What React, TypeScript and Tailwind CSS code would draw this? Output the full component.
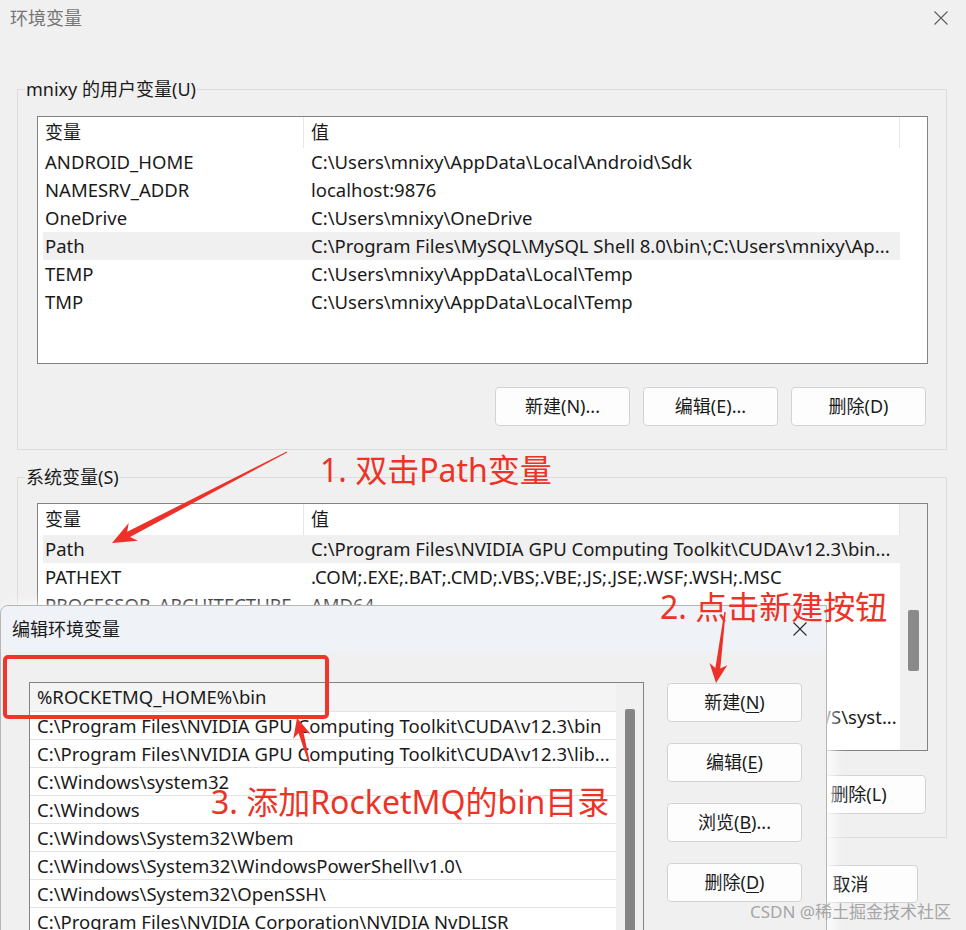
import React from "react";

type Row = [string, string];

const userVars: Row[] = [
  ["ANDROID_HOME", "C:\\Users\\mnixy\\AppData\\Local\\Android\\Sdk"],
  ["NAMESRV_ADDR", "localhost:9876"],
  ["OneDrive", "C:\\Users\\mnixy\\OneDrive"],
  ["Path", "C:\\Program Files\\MySQL\\MySQL Shell 8.0\\bin\\;C:\\Users\\mnixy\\Ap..."],
  ["TEMP", "C:\\Users\\mnixy\\AppData\\Local\\Temp"],
  ["TMP", "C:\\Users\\mnixy\\AppData\\Local\\Temp"],
];

const sysVars: Row[] = [
  ["Path", "C:\\Program Files\\NVIDIA GPU Computing Toolkit\\CUDA\\v12.3\\bin..."],
  ["PATHEXT", ".COM;.EXE;.BAT;.CMD;.VBS;.VBE;.JS;.JSE;.WSF;.WSH;.MSC"],
  ["PROCESSOR_ARCHITECTURE", "AMD64"],
  ["PROCESSOR_IDENTIFIER", "Intel64 Family 6 Model 154 Stepping 3, GenuineIntel"],
  ["PROCESSOR_LEVEL", "6"],
  ["PROCESSOR_REVISION", "9a03"],
  ["PSModulePath", "%ProgramFiles%\\WindowsPowerShell\\Modules;C:\\WINDOWS\\syst..."],
  ["TEMP", "C:\\WINDOWS\\TEMP"],
];

const pathEntries = [
  "%ROCKETMQ_HOME%\\bin",
  "C:\\Program Files\\NVIDIA GPU Computing Toolkit\\CUDA\\v12.3\\bin",
  "C:\\Program Files\\NVIDIA GPU Computing Toolkit\\CUDA\\v12.3\\lib...",
  "C:\\Windows\\system32",
  "C:\\Windows",
  "C:\\Windows\\System32\\Wbem",
  "C:\\Windows\\System32\\WindowsPowerShell\\v1.0\\",
  "C:\\Windows\\System32\\OpenSSH\\",
  "C:\\Program Files\\NVIDIA Corporation\\NVIDIA NvDLISR",
];

const CloseIcon = ({ color = "#5c5c5c" }: { color?: string }) => (
  <svg width="14" height="14" viewBox="0 0 14 14">
    <path d="M0.5 0.5L13.5 13.5M13.5 0.5L0.5 13.5" stroke={color} strokeWidth="1.1" />
  </svg>
);

const Btn = ({ children, className = "" }: { children: React.ReactNode; className?: string }) => (
  <div
    className={`flex w-[135px] shrink-0 items-center justify-center rounded-[4px] border border-[#d3d3d3] bg-[#fdfdfd] text-[18px] ${className}`}
  >
    {children}
  </div>
);

const GroupBox = ({
  title,
  className,
  children,
}: {
  title: string;
  className: string;
  children: React.ReactNode;
}) => (
  <fieldset className={`ml-[17px] w-[930px] border border-[#dcdcdc] pb-[23px] pl-[19px] ${className}`}>
    <legend className="-ml-[12px] px-[1px] text-[18px] leading-[24px]">{title}</legend>
    {children}
  </fieldset>
);

const VarList = ({
  rows,
  selected,
  scrollbar,
  className,
}: {
  rows: Row[];
  selected: number;
  scrollbar?: boolean;
  className: string;
}) => (
  <div className={`flex h-[248px] w-[891px] overflow-hidden border border-[#838383] bg-white ${className}`}>
    <div className="w-[862px] pl-[5px]">
      <div className="flex h-[31px] text-[18px]">
        <div className="flex w-[261px] items-center border-r border-[#e6e6e6] pl-[2px]">变量</div>
        <div className="flex flex-1 items-center border-r border-[#e6e6e6] pl-[7px]">值</div>
      </div>
      {rows.map(([name, value], i) => (
        <div key={name + i} className={`flex h-[28px] items-center ${i === selected ? "bg-[#f0f0f0]" : ""}`}>
          <div className="w-[261px] overflow-hidden whitespace-nowrap pl-[2px]">{name}</div>
          <div className="flex-1 overflow-hidden whitespace-nowrap pl-[7px]">{value}</div>
        </div>
      ))}
    </div>
    {scrollbar ? (
      <div className="flex-1 bg-[#f0f0f0] pl-[8px] pt-[106px]">
        <div className="h-[61px] w-[11px] rounded-[2px] bg-[#8a8a8a]" />
      </div>
    ) : null}
  </div>
);

function arrow(
  tail: [number, number],
  tip: [number, number],
  headLen: number,
  headW: number,
  tailW: number,
  neckW: number
) {
  const dx = tail[0] - tip[0];
  const dy = tail[1] - tip[1];
  const len = Math.hypot(dx, dy);
  const ux = dx / len;
  const uy = dy / len;
  const nx = -uy;
  const ny = ux;
  const bx = tip[0] + ux * headLen;
  const by = tip[1] + uy * headLen;
  const nkx = tip[0] + ux * headLen * 0.78;
  const nky = tip[1] + uy * headLen * 0.78;
  const pts = [
    [tip[0], tip[1]],
    [bx + nx * headW, by + ny * headW],
    [nkx + nx * neckW, nky + ny * neckW],
    [tail[0] + nx * tailW, tail[1] + ny * tailW],
    [tail[0] - nx * tailW, tail[1] - ny * tailW],
    [nkx - nx * neckW, nky - ny * neckW],
    [bx - nx * headW, by - ny * headW],
  ];
  return pts.map((p) => p.map((v) => v.toFixed(1)).join(",")).join(" ");
}

export default function App() {
  return (
    <div className="relative h-[930px] w-[966px] overflow-hidden bg-[#f0f0f0] font-['Noto_Sans','Noto_Sans_CJK_SC',sans-serif] text-[18.5px] text-[#1a1a1a]">
      {/* 环境变量 window */}
      <div className="flex h-full flex-col">
        <div className="flex h-[36px] shrink-0 items-center justify-between pl-[10px] pr-[18px] text-[18px] text-[#767676]">
          <span>环境变量</span>
          <CloseIcon />
        </div>

        <GroupBox title="mnixy 的用户变量(U)" className="mt-[41px]">
          <VarList rows={userVars} selected={3} className="mt-[15px]" />
          <div className="mt-[23px] flex w-[891px] justify-end gap-[13px] pr-[2px]">
            <Btn className="h-[39px]">新建(N)...</Btn>
            <Btn className="h-[39px]">编辑(E)...</Btn>
            <Btn className="h-[39px]">删除(D)</Btn>
          </div>
        </GroupBox>

        <GroupBox title="系统变量(S)" className="mt-[15px]">
          <VarList rows={sysVars} selected={0} scrollbar className="mt-[14px]" />
          <div className="mt-[24px] flex w-[891px] justify-end gap-[13px] pr-[2px]">
            <Btn className="h-[39px]">新建(W)...</Btn>
            <Btn className="h-[39px]">编辑(I)...</Btn>
            <Btn className="h-[39px]">删除(L)</Btn>
          </div>
        </GroupBox>

        <div className="mt-[27px] flex justify-end gap-[13px] pr-[48px]">
          <Btn className="h-[38px]">确定</Btn>
          <Btn className="h-[38px]">取消</Btn>
        </div>
      </div>

      {/* 编辑环境变量 dialog */}
      <div className="absolute left-0 top-[605px] h-[340px] w-[827px] rounded-tl-[8px] border border-[#b5b5b5] bg-[#f0f0f0] shadow-[6px_0_14px_rgba(255,255,255,0.9)]">
        <div className="flex h-[46px] items-center justify-between rounded-tl-[8px] bg-[#eff2f7] pl-[11px] pr-[19px] text-[18px]">
          <span>编辑环境变量</span>
          <CloseIcon color="#2a2a2a" />
        </div>
        <div className="flex gap-[23px] pl-[28px] pt-[30px]">
          <div className="flex h-[300px] w-[615px] shrink-0 border border-[#838383] bg-white">
            <div className="w-[586px] overflow-hidden">
              {pathEntries.map((p, i) => (
                <div
                  key={p}
                  className={`flex h-[28px] items-center whitespace-nowrap pl-[7px] ${
                    i === 0 ? "bg-[#f4f4f4]" : "border-t border-[#e3e3e3]"
                  }`}
                >
                  {p}
                </div>
              ))}
            </div>
            <div className="flex-1 bg-[#f0f0f0] pl-[9px] pt-[26px]">
              <div className="h-[300px] w-[10px] rounded-[2px] bg-[#858585]" />
            </div>
          </div>
          <div className="mt-[1px] flex flex-col gap-[21px]">
            <Btn className="h-[39px]">
              新建(<span className="underline underline-offset-[3px]">N</span>)
            </Btn>
            <Btn className="h-[39px]">
              编辑(<span className="underline underline-offset-[3px]">E</span>)
            </Btn>
            <Btn className="h-[39px]">
              浏览(<span className="underline underline-offset-[3px]">B</span>)...
            </Btn>
            <Btn className="h-[39px]">
              删除(<span className="underline underline-offset-[3px]">D</span>)
            </Btn>
          </div>
        </div>
      </div>

      {/* annotations */}
      <svg className="pointer-events-none absolute inset-0" width="966" height="930" viewBox="0 0 966 930">
        <rect x="5" y="657" width="322" height="60" rx="3" fill="none" stroke="#f0352b" strokeWidth="4" />
        <polygon fill="#ee3128" points={arrow([287, 452], [112, 543], 24, 10, 0.5, 3)} />
        <polygon fill="#ee3128" points={arrow([725, 612], [716, 683], 19, 9, 0.7, 2.5)} />
        <polygon fill="#ee3128" points={arrow([309, 762], [297, 718], 19, 9, 0.7, 2.5)} />
      </svg>
      <div className="absolute left-[320px] top-[450px] text-[32px] leading-[40px] text-[#ec3328]">
        1. 双击Path变量
      </div>
      <div className="absolute left-[660px] top-[587px] text-[32px] leading-[40px] text-[#ec3328]">
        2. 点击新建按钮
      </div>
      <div className="absolute left-[211px] top-[782px] text-[32px] leading-[40px] text-[#ec3328]">
        3. 添加RocketMQ的bin目录
      </div>
      <div className="absolute left-[750px] top-[899px] whitespace-nowrap text-[17px] leading-[26px] text-[#a6a6a6]">
        CSDN @稀土掘金技术社区
      </div>
    </div>
  );
}
